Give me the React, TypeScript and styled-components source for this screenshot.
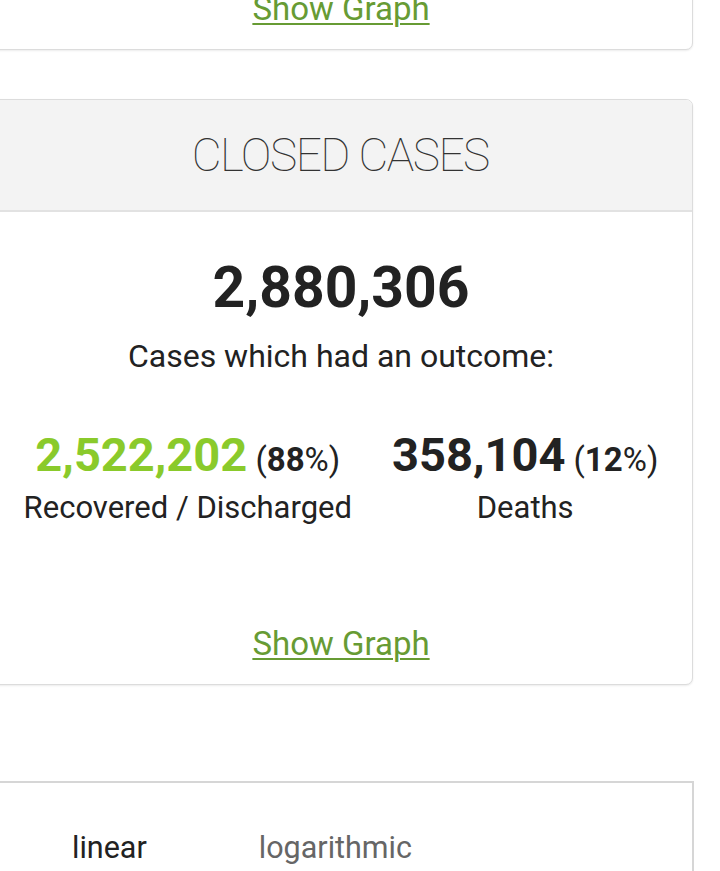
import React from "react";
import styled, { createGlobalStyle } from "styled-components";

const Global = createGlobalStyle`
  html, body { margin: 0; padding: 0; background: #fff; }
  body { overflow: hidden; font-family: Roboto, "Liberation Sans", Arial, sans-serif; color: #222; }
`;

const Page = styled.div`
  width: 720px;
  height: 871px;
  overflow: hidden;
`;

const Card = styled.div`
  margin-left: -11px;
  width: 704px;
  box-sizing: border-box;
  background: #fff;
  border: 1px solid #dcdcdc;
  border-radius: 7px;
  box-shadow: 0 1px 2px rgba(0, 0, 0, 0.08);
  text-align: center;
  overflow: hidden;
`;

const TopCard = styled(Card)`
  margin-top: -34px;
  padding-top: 22px;
`;

const ClosedCard = styled(Card)`
  margin-top: 49px;
`;

const Header = styled.div`
  background: #f3f3f3;
  border-bottom: 2px solid #e2e2e2;
  padding: 33px 0 32px;
`;

const Title = styled.h3`
  margin: 0;
  font-size: 46px;
  line-height: 45px;
  font-weight: 100;
  color: #333;
  font-stretch: 88%;
  letter-spacing: -1.5px;
  text-indent: -1.5px;
`;

const Body = styled.div`
  padding-top: 47px;
`;

const BigNumber = styled.div`
  font-size: 57px;
  line-height: 57px;
  font-weight: 700;
  color: #222;
`;

const Subtitle = styled.div`
  margin-top: 22px;
  font-size: 32px;
  line-height: 37px;
  color: #222;
`;

const Stats = styled.div`
  margin-top: 56px;
  display: flex;
  justify-content: center;
  gap: 40px;
`;

const Stat = styled.div`
  display: flex;
  flex-direction: column;
  align-items: center;
`;

const StatNumber = styled.div`
  font-size: 33px;
  line-height: 48px;
  white-space: nowrap;
  color: #222;
`;

const Figure = styled.span<{ $color: string }>`
  font-size: 47px;
  font-weight: 700;
  color: ${(p) => p.$color};
`;

const Pct = styled.strong`
  font-weight: 700;
`;

const StatLabel = styled.div`
  margin-top: 6px;
  font-size: 31px;
  line-height: 36px;
  color: #222;
  white-space: nowrap;
`;

const GraphLink = styled.a<{ $gap?: number }>`
  display: block;
  width: max-content;
  margin: ${(p) => p.$gap ?? 0}px auto 0;
  padding-bottom: 21px;
  font-size: 33px;
  line-height: 39px;
  color: #679b34;
  text-decoration: underline;
  text-underline-offset: 3px;
  text-decoration-thickness: 2px;
  cursor: pointer;
`;

const ChartCard = styled.div`
  margin-top: 96px;
  margin-left: -11px;
  width: 705px;
  height: 200px;
  box-sizing: border-box;
  border: 2px solid #d6d6d6;
  background: #fff;
  padding: 47px 0 0 81px;
  display: flex;
  gap: 112px;
`;

const Tab = styled.span<{ $active?: boolean }>`
  font-size: 30.5px;
  line-height: 36px;
  color: ${(p) => (p.$active ? "#222" : "#666")};
`;

export default function App() {
  return (
    <>
      <Global />
      <Page>
        <TopCard>
          <GraphLink>Show Graph</GraphLink>
        </TopCard>
        <ClosedCard>
          <Header>
            <Title>CLOSED CASES</Title>
          </Header>
          <Body>
            <BigNumber>2,880,306</BigNumber>
            <Subtitle>Cases which had an outcome:</Subtitle>
            <Stats>
              <Stat>
                <StatNumber>
                  <Figure $color="#8aca2b">2,522,202</Figure> (<Pct>88</Pct>%)
                </StatNumber>
                <StatLabel>Recovered / Discharged</StatLabel>
              </Stat>
              <Stat>
                <StatNumber>
                  <Figure $color="#222">358,104</Figure> (<Pct>12</Pct>%)
                </StatNumber>
                <StatLabel>Deaths</StatLabel>
              </Stat>
            </Stats>
            <GraphLink $gap={98}>Show Graph</GraphLink>
          </Body>
        </ClosedCard>
        <ChartCard>
          <Tab $active>linear</Tab>
          <Tab>logarithmic</Tab>
        </ChartCard>
      </Page>
    </>
  );
}
